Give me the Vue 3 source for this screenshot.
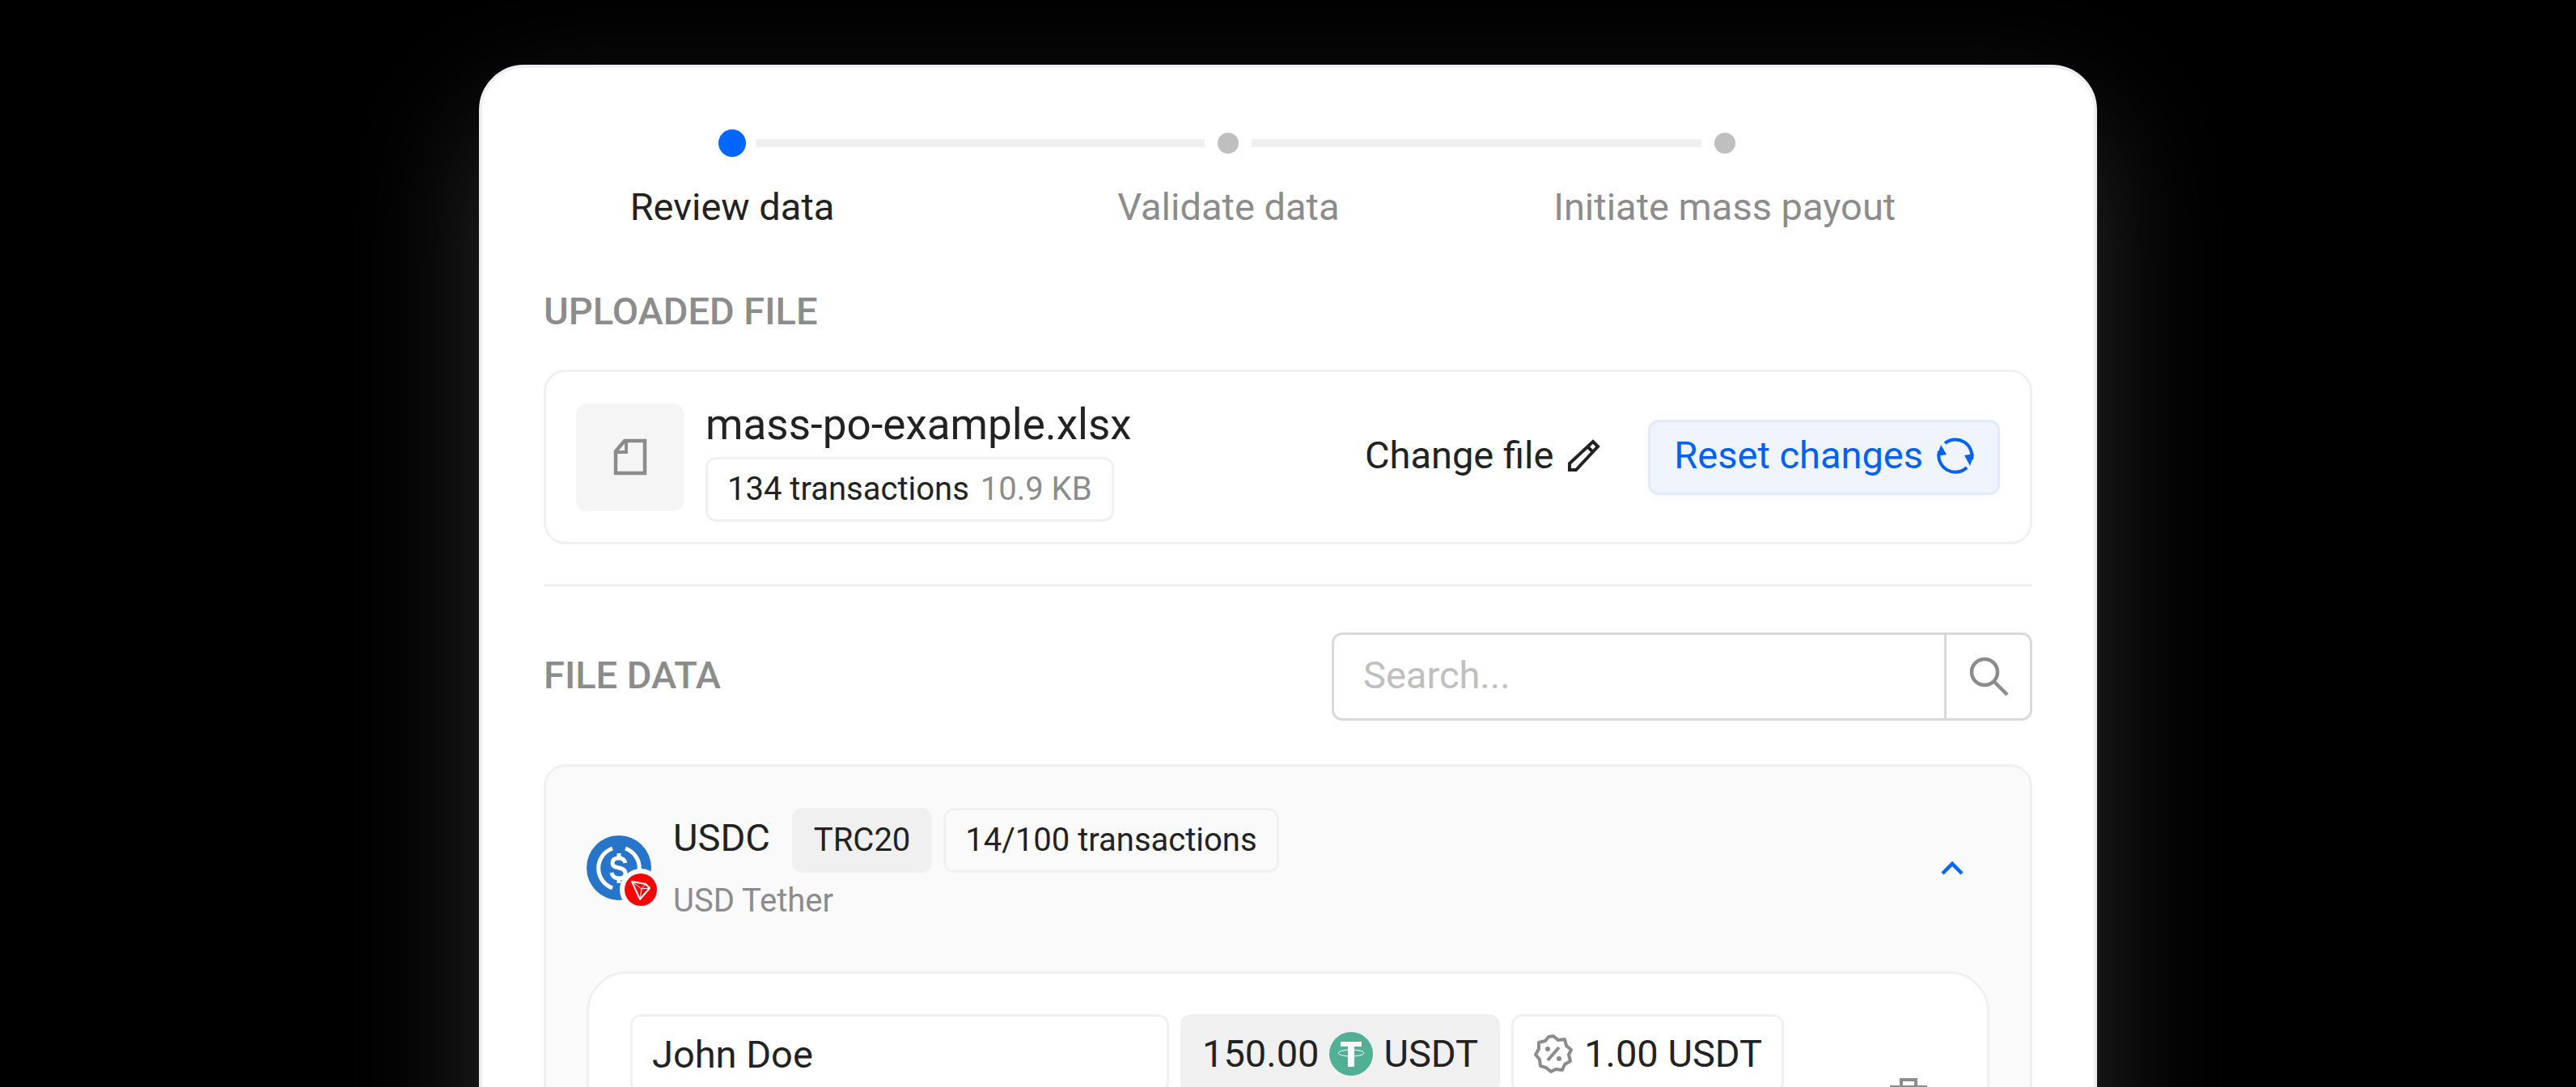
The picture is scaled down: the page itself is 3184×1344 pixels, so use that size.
<template>
  <div class="page">
    <main class="panel">
      <ol class="steps">
        <li v-for="(step, index) in steps" :key="step" class="step" :class="{ active: index === current }">
          <div class="step-rail">
            <span class="step-slot"><span class="step-dot"></span></span>
            <span v-if="index < steps.length - 1" class="step-line"></span>
          </div>
          <div class="step-label">{{ step }}</div>
        </li>
      </ol>

      <h2 class="section-title">UPLOADED FILE</h2>
      <section class="file">
        <div class="file-icon">
          <svg width="54" height="54" viewBox="0 0 54 54" fill="none" stroke="#8c8c8c" stroke-width="4.5">
            <path d="M20 7H45V47H9V20Z" />
            <path d="M22 7V21H9" stroke-width="4" />
          </svg>
        </div>
        <div class="file-info">
          <div class="file-name">mass-po-example.xlsx</div>
          <span class="tag tag-outline">134 transactions <span class="muted">10.9 KB</span></span>
        </div>
        <div class="file-actions">
          <button type="button" class="btn btn-text">
            Change file
            <svg width="42" height="42" viewBox="0 0 42 42" fill="none" stroke="currentColor" stroke-width="4">
              <path d="M3 39V31L32 4L38 10L11 39Z" />
              <path d="M25 10L32 17" />
            </svg>
          </button>
          <button type="button" class="btn btn-primary">
            Reset changes
            <svg width="46" height="46" viewBox="0 0 46 46" fill="none" stroke="currentColor" stroke-width="4">
              <path d="M10 8A20.5 20.5 0 0 1 43 28" />
              <path d="M37 38A20.5 20.5 0 0 1 3 18" />
              <path d="M34 23L46 21L41 36Z" fill="currentColor" stroke="none" />
              <path d="M0 24L5 10L12 22Z" fill="currentColor" stroke="none" />
            </svg>
          </button>
        </div>
      </section>

      <hr class="divider" />

      <div class="toolbar">
        <h2 class="section-title">FILE DATA</h2>
        <form class="search" @submit.prevent>
          <input v-model="query" class="search-input" type="text" placeholder="Search..." aria-label="Search" />
          <button type="submit" class="search-btn" aria-label="Search">
            <svg width="50" height="50" viewBox="0 0 50 50" fill="none" stroke="#8c8c8c" stroke-width="4.5">
              <circle cx="20" cy="19" r="16" />
              <path d="M31 30L48 47" />
            </svg>
          </button>
        </form>
      </div>

      <section class="group">
        <header class="group-header">
          <div class="coin">
            <svg width="80" height="80" viewBox="0 0 80 80">
              <circle cx="40" cy="40" r="40" fill="#2775ca" />
              <g fill="none" stroke="#fff" stroke-width="5">
                <path d="M32 16A26 26 0 0 0 32 65" />
                <path d="M48 16A26 26 0 0 1 48 65" />
                <path d="M48 34C47 30 44 28 40 28C35 28 32 30 32 34C32 38 35 39 40 40C45 41 48 43 48 47C48 51 45 53 40 53C35 53 32 51 31 46" />
                <path d="M40 22V28M40 53V59" />
              </g>
            </svg>
            <svg class="coin-badge" width="52" height="52" viewBox="0 0 52 52">
              <circle cx="26" cy="26" r="26" fill="#fff" />
              <circle cx="26" cy="26" r="20" fill="#f00" />
              <g fill="none" stroke="#fff" stroke-width="2" stroke-linejoin="round">
                <path d="M15 16L32 19L37 24L25 38Z" />
                <path d="M15 16L27 25L37 24M32 19L27 25L25 38" stroke-width="1" />
              </g>
            </svg>
          </div>
          <div class="group-info">
            <div class="group-title">
              <span class="group-name">USDC</span>
              <span class="tag tag-filled">TRC20</span>
              <span class="tag tag-outline">14/100 transactions</span>
            </div>
            <div class="group-sub">USD Tether</div>
          </div>
          <button type="button" class="toggle" aria-label="Collapse" @click="open = !open">
            <svg width="32" height="20" viewBox="0 0 32 20" fill="none" stroke="#0066ff" stroke-width="4.5">
              <path d="M4 17L16 5L28 17" />
            </svg>
          </button>
        </header>

        <div v-if="open" class="record">
          <div class="record-fields">
            <input v-model="name" class="field field-name" type="text" aria-label="Name" />
            <div class="field field-filled">
              150.00
              <svg width="54" height="54" viewBox="0 0 54 54">
                <circle cx="27" cy="27" r="27" fill="#50af95" />
                <path d="M14 12H40V18H31V43H23V18H14Z" fill="#fff" />
                <ellipse cx="27" cy="26" rx="16" ry="4" fill="none" stroke="#fff" stroke-width="1" />
              </svg>
              USDT
            </div>
            <div class="field">
              <svg width="50" height="50" viewBox="0 0 50 50" fill="none" stroke="#8c8c8c" stroke-width="4" stroke-linejoin="round">
                <path d="M25 3L31 8L39 7L41 15L47 20L44 26L46 34L39 38L36 45L28 44L22 47L16 42L9 40L8 32L3 26L7 19L7 11L15 9L19 4Z" />
                <path d="M18 33L32 17" />
                <circle cx="18" cy="19" r="3" fill="#8c8c8c" stroke="none" />
                <circle cx="32" cy="31" r="3" fill="#8c8c8c" stroke="none" />
              </svg>
              1.00 USDT
            </div>
          </div>
          <button type="button" class="remove" aria-label="Delete">
            <svg width="46" height="50" viewBox="0 0 46 50" fill="none" stroke="#8c8c8c" stroke-width="4">
              <path d="M0 11H46M14 11V2H32V11M6 11V48H40V11" />
            </svg>
          </button>
        </div>
      </section>
    </main>
  </div>
</template>

<script setup>
import { ref } from 'vue'

const steps = ['Review data', 'Validate data', 'Initiate mass payout']
const current = ref(0)
const query = ref('')
const name = ref('John Doe')
const open = ref(true)
</script>

<style>
body {
  margin: 0;
  background: #000;
}
</style>

<style scoped>
.page {
  box-sizing: border-box;
  height: 100vh;
  padding: 80px 40px 0;
  overflow: hidden;
  background: #000;
  color: #222;
  font-family: Roboto, 'Liberation Sans', sans-serif;
  font-size: 47px;
  line-height: 72px;
}

.page * {
  box-sizing: border-box;
}

svg {
  display: block;
  flex: none;
}

button,
input {
  margin: 0;
  font: inherit;
  color: inherit;
}

.panel {
  max-width: 2000px;
  min-height: 1500px;
  margin: 0 auto;
  padding: 76px;
  border: 4px solid #efeef3;
  border-radius: 56px;
  background: #fff;
  box-shadow: 0 66px 160px rgba(255, 255, 255, 0.17);
}

.steps {
  display: grid;
  grid-template-columns: repeat(3, 1fr);
  margin: 0 0 57px;
  padding: 0;
  list-style: none;
}

.step {
  min-width: 0;
  color: #8c8c8c;
}

/* the rail runs from the centre of this label to the next one */
.step-rail {
  display: flex;
  align-items: center;
  width: 100%;
  height: 34px;
  margin-left: 216px;
}

.step-slot {
  display: flex;
  flex: none;
  align-items: center;
  justify-content: center;
  width: 34px;
}

.step-dot {
  width: 26px;
  height: 26px;
  border-radius: 50%;
  background: #bfbfbf;
}

.step-line {
  flex: 1;
  height: 10px;
  margin: 0 12px;
  background: #f0f0f0;
}

.step-label {
  width: 466px;
  margin-top: 26px;
  text-align: center;
}

.step.active {
  color: #222;
}

.step.active .step-dot {
  width: 34px;
  height: 34px;
  background: #0066ff;
}

.section-title {
  margin: 0;
  color: #8c8c8c;
  font-size: 47px;
  font-weight: 500;
}

.file {
  display: flex;
  align-items: center;
  margin-top: 36px;
  padding: 25px 37px;
  border: 3px solid #f0f0f0;
  border-radius: 27px;
}

.file-icon {
  display: flex;
  align-items: center;
  justify-content: center;
  width: 133px;
  height: 133px;
  margin-right: 27px;
  border-radius: 13px;
  background: #f5f5f5;
}

.file-info {
  display: flex;
  flex: 1;
  flex-direction: column;
  align-items: flex-start;
}

.file-name {
  font-size: 53px;
  line-height: 80px;
}

.tag {
  display: inline-block;
  padding: 0 24px;
  border: 3px solid #f0f0f0;
  border-radius: 13px;
  font-size: 40px;
  line-height: 74px;
  white-space: nowrap;
}

.tag-filled {
  background: #f0f0f0;
}

.muted {
  margin-left: 4px;
  color: #8c8c8c;
}

.file-actions {
  display: flex;
  align-items: center;
  gap: 26px;
}

.btn {
  display: flex;
  align-items: center;
  gap: 17px;
  height: 93px;
  padding: 0 29px 4px;
  border: 3px solid transparent;
  border-radius: 13px;
  background: none;
  white-space: nowrap;
}

.btn-primary {
  border-color: #e0eafb;
  background: #f0f4fc;
  color: #0061f2;
  box-shadow: 0 7px 7px rgba(0, 102, 255, 0.02);
}

.divider {
  height: 3px;
  margin: 49px 0 57px;
  border: 0;
  background: #f0f0f0;
}

.toolbar {
  display: flex;
  align-items: center;
  justify-content: space-between;
}

.toolbar .section-title {
  padding-bottom: 3px;
}

.search {
  display: flex;
  width: 866px;
  height: 109px;
  border: 3px solid #d9d9d9;
  border-radius: 13px;
}

.search-input {
  flex: 1;
  min-width: 0;
  padding: 0 36px 3px;
  border: 0;
  background: none;
  outline: none;
}

.search-input::placeholder {
  color: #bfbfbf;
}

.search-btn {
  display: flex;
  align-items: center;
  justify-content: center;
  width: 106px;
  padding: 0;
  border: 0;
  border-left: 3px solid #d9d9d9;
  background: none;
}

.group {
  margin-top: 54px;
  padding: 51px 50px;
  border: 3px solid #f0f0f0;
  border-radius: 27px;
  background: #fafafa;
}

.group-header {
  display: flex;
  align-items: center;
}

.coin {
  position: relative;
  margin-right: 27px;
}

.coin-badge {
  position: absolute;
  right: -13px;
  bottom: -13px;
}

.group-info {
  flex: 1;
}

.group-title {
  display: flex;
  align-items: baseline;
  gap: 14px;
}

.group-name {
  margin-right: 13px;
}

.group-sub {
  margin-top: 3px;
  color: #8c8c8c;
  font-size: 40px;
  line-height: 64px;
}

.toggle {
  padding: 30px;
  border: 0;
  background: none;
}

.record {
  display: flex;
  align-items: center;
  justify-content: space-between;
  margin-top: 55px;
  padding: 50px 74px 50px 51px;
  border: 3px solid #f0f0f0;
  border-radius: 50px;
  background: #fff;
}

.record-fields {
  display: flex;
  flex-wrap: wrap;
  align-items: flex-start;
  gap: 14px;
  min-height: 208px;
}

.field {
  display: flex;
  align-items: center;
  gap: 13px;
  height: 98px;
  padding: 0 24px;
  border: 3px solid #f0f0f0;
  border-radius: 13px;
  background: #fff;
  white-space: nowrap;
}

.field-name {
  width: 666px;
}

.field-filled {
  background: #f0f0f0;
}

.remove {
  padding: 0;
  border: 0;
  background: none;
}
</style>
